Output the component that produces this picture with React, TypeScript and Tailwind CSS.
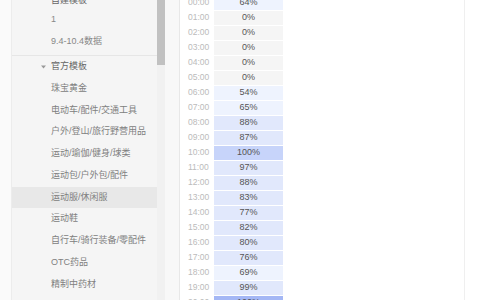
import React from "react";

const rows: { t: string; v: string; bg: string }[] = [
  { t: "00:00", v: "64%", bg: "bg-[#eef3fe]" },
  { t: "01:00", v: "0%", bg: "bg-[#f5f5f5]" },
  { t: "02:00", v: "0%", bg: "bg-[#f5f5f5]" },
  { t: "03:00", v: "0%", bg: "bg-[#f5f5f5]" },
  { t: "04:00", v: "0%", bg: "bg-[#f5f5f5]" },
  { t: "05:00", v: "0%", bg: "bg-[#f5f5f5]" },
  { t: "06:00", v: "54%", bg: "bg-[#eef3fe]" },
  { t: "07:00", v: "65%", bg: "bg-[#eef3fe]" },
  { t: "08:00", v: "88%", bg: "bg-[#e1e8fc]" },
  { t: "09:00", v: "87%", bg: "bg-[#e1e8fc]" },
  { t: "10:00", v: "100%", bg: "bg-[#c7d4fa]" },
  { t: "11:00", v: "97%", bg: "bg-[#e1e8fc]" },
  { t: "12:00", v: "88%", bg: "bg-[#e1e8fc]" },
  { t: "13:00", v: "83%", bg: "bg-[#e1e8fc]" },
  { t: "14:00", v: "77%", bg: "bg-[#e1e8fc]" },
  { t: "15:00", v: "82%", bg: "bg-[#e1e8fc]" },
  { t: "16:00", v: "80%", bg: "bg-[#e1e8fc]" },
  { t: "17:00", v: "76%", bg: "bg-[#e1e8fc]" },
  { t: "18:00", v: "69%", bg: "bg-[#eef3fe]" },
  { t: "19:00", v: "99%", bg: "bg-[#e1e8fc]" },
  { t: "20:00", v: "100%", bg: "bg-[#a4b7f5]" },
];

const official = [
  "珠宝黄金",
  "电动车/配件/交通工具",
  "户外/登山/旅行野营用品",
  "运动/瑜伽/健身/球类",
  "运动包/户外包/配件",
  "运动服/休闲服",
  "运动鞋",
  "自行车/骑行装备/零配件",
  "OTC药品",
  "精制中药材",
];

function Tri() {
  return (
    <svg width="5" height="4" viewBox="0 0 5 4" className="shrink-0">
      <path d="M0 0.5 L5 0.5 L2.5 3.5 Z" fill="#999" />
    </svg>
  );
}

export default function App() {
  return (
    <div
      className="w-[480px] h-[300px] overflow-hidden flex bg-white text-[9px]"
      style={{ fontFamily: '"Liberation Sans", "Noto Sans CJK SC", sans-serif' }}
    >
      <div className="w-[12px] shrink-0 bg-[#fafafa] border-r border-[#ececec]" />
      <div className="w-[145px] shrink-0 bg-[#f5f5f5] overflow-hidden">
        <div className="-mt-[8px]">
          <div className="h-[17px] flex items-center pl-[39px] text-[#666]">自建模板</div>
          <div className="h-[22px] flex items-center pl-[39px] text-[#888]">1</div>
          <div className="h-[22px] flex items-center pl-[39px] text-[#888]">9.4-10.4数据</div>
          <div className="h-[3px] border-b border-[#e6e6e6]" />
          <div className="h-[21.75px] flex items-center pl-[29px] gap-[5px] text-[#666]">
            <Tri />
            <span>官方模板</span>
          </div>
          {official.map((o) => (
            <div
              key={o}
              className={`h-[21.75px] flex items-center pl-[39px] text-[#808080] ${
                o === "运动服/休闲服" ? "bg-[#e8e8e8]" : ""
              }`}
            >
              {o}
            </div>
          ))}
        </div>
      </div>
      <div className="w-[8px] shrink-0 bg-[#f1f1f1]">
        <div className="h-[65px] bg-[#c1c1c1]" />
      </div>
      <div className="w-[15px] shrink-0 bg-[#f8f8f8] border-r border-[#e8e8e8]" />
      <div className="w-[284px] shrink-0 overflow-hidden pl-[8px]">
        <div className="-mt-[4px] flex flex-col">
          {rows.map((r) => (
            <div key={r.t} className="h-[15px] flex">
              <div className="w-[26px] text-[#bbbbbb] text-[8.5px] leading-[12px]">{r.t}</div>
              <div
                className={`w-[69px] h-[14px] flex items-center justify-center text-[#555] ${r.bg}`}
              >
                {r.v}
              </div>
            </div>
          ))}
        </div>
      </div>
      <div className="w-[1px] shrink-0 bg-[#efefef]" />
      <div className="flex-1" />
    </div>
  );
}
